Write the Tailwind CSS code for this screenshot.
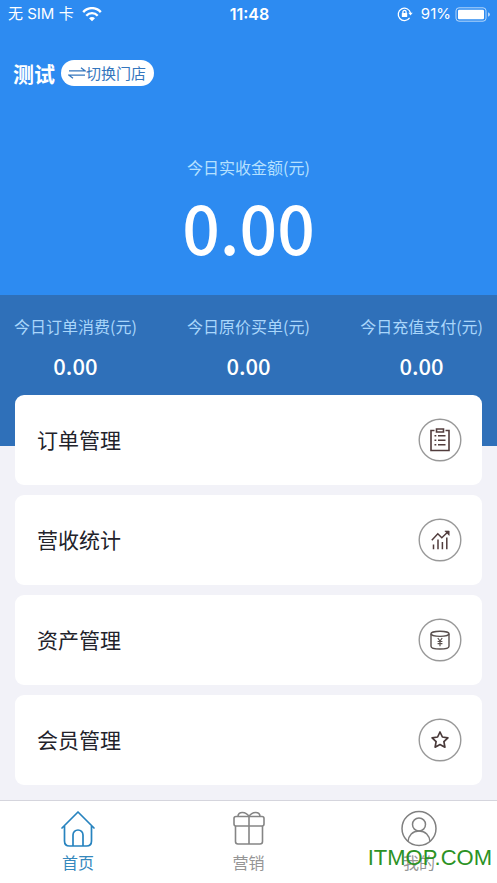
<!DOCTYPE html>
<html lang="zh-CN">
<head>
<meta charset="utf-8">
<meta name="viewport" content="width=device-width, initial-scale=1">
<title>首页</title>
<script src="https://cdn.jsdelivr.net/npm/@tailwindcss/browser@4"></script>
</head>
<body class="flex min-h-screen flex-col bg-[#f2f2f8] font-['Noto_Sans_CJK_SC',sans-serif] text-[#22222a]">
<header class="bg-[#2d8bf1] text-white">
  <div class="grid h-7 grid-cols-3 items-center pr-[6px] pl-2">
    <div class="flex items-center gap-2 text-[15px] leading-7 font-['Inter','Noto_Sans_CJK_SC',sans-serif]">
      <span class="whitespace-nowrap">无 SIM 卡</span>
      <svg class="h-[15px] w-5" viewBox="0 0 20 15" fill="none" stroke="currentColor" stroke-width="2.400" aria-hidden="true">
        <path d="M1.200 5.100C6-.2 14-.2 18.800 5.100M4.300 8.700c3.100-3.400 8.300-3.400 11.400 0"/>
        <path d="M10 14.200 7 11.200c1.700-1.700 4.300-1.700 6 0z" fill="currentColor" stroke="none"/>
      </svg>
    </div>
    <time class="text-center font-['Inter',sans-serif] text-base leading-7 font-semibold">11:48</time>
    <div class="flex items-center justify-end gap-1">
      <svg class="mr-1 h-4 w-4" viewBox="0 0 16 16" fill="none" stroke="currentColor" stroke-width="1.300" aria-hidden="true">
        <path d="M12.600 11.800A6.200 6.200 0 1 1 13.500 7"/>
        <path d="M11.300 6.800h4.400l-2.200 2.800z" fill="currentColor" stroke="none"/>
        <rect x="4.800" y="7" width="5.400" height="4" rx=".5" fill="currentColor" stroke="none"/>
        <path d="M5.900 7.200V6a1.600 1.600 0 0 1 3.200 0v1.200"/>
      </svg>
      <span class="font-['Inter',sans-serif] text-[15px] leading-7">91%</span>
      <svg class="h-[15px] w-9" viewBox="0 0 36 15" fill="none" aria-hidden="true">
        <rect x="1" y=".8" width="30" height="13.400" rx="3" stroke="#fff" stroke-opacity=".65"/>
        <rect x="3" y="2.800" width="26" height="9.400" rx="1.300" fill="#fff"/>
        <path d="M33 5.300q2 .8 2 2.200t-2 2.200z" fill="#fff" fill-opacity=".65"/>
      </svg>
    </div>
  </div>
  <div class="mt-8 flex items-center gap-[6px] px-[13px]">
    <h1 class="text-[21px] leading-[26px] font-bold">测试</h1>
    <button type="button" class="flex h-[26px] items-center rounded-full bg-white pr-2 pl-[7px] text-[15px] text-[#3476bd]">
      <svg class="h-4 w-[18px]" viewBox="0 0 18 16" fill="none" stroke="currentColor" stroke-width="1.300" aria-hidden="true">
        <path d="M1 5.800h16l-4-3M17 10.200H1l4 3"/>
      </svg>
      <span>切换门店</span>
    </button>
  </div>
  <div class="pt-[70px] pb-8 text-center">
    <p class="text-base leading-[22px] text-[#b5e0ff]">今日实收金额(元)</p>
    <p class="mt-3 text-[66px] leading-[73px] font-medium">0.00</p>
  </div>
</header>
<section class="flex justify-between bg-[#2f70b9] px-[14px] pt-5 pb-[67px] text-center">
  <div>
    <p class="text-base leading-[22px] text-[#a9d6fb]">今日订单消费(元)</p>
    <p class="mt-[14px] text-[22px] leading-7 font-medium text-white">0.00</p>
  </div>
  <div>
    <p class="text-base leading-[22px] text-[#a9d6fb]">今日原价买单(元)</p>
    <p class="mt-[14px] text-[22px] leading-7 font-medium text-white">0.00</p>
  </div>
  <div>
    <p class="text-base leading-[22px] text-[#a9d6fb]">今日充值支付(元)</p>
    <p class="mt-[14px] text-[22px] leading-7 font-medium text-white">0.00</p>
  </div>
</section>
<main class="-mt-[51px] flex flex-1 flex-col gap-[10px] px-[15px] pb-[15px]">
  <a href="#orders" class="flex h-[90px] items-center justify-between rounded-[9px] bg-white pr-5 pl-[22px] text-[21px]">
    <span>订单管理</span>
    <svg class="h-11 w-11" viewBox="0 0 44 44" fill="none" stroke="#513c3c" stroke-width="1.600" aria-hidden="true">
      <circle cx="22" cy="22" r="20.800" stroke="#999" stroke-width="1.400"/>
      <path d="M16.500 12.500H13v20h18v-20h-3.500M18.500 11h7v3h-7z"/>
      <path d="M16.500 17.800h1.800m1.700 0h7.500M16.500 22.300h1.800m1.700 0h7.500M16.500 26.800h1.800m1.700 0h7.500" stroke-width="1.400"/>
    </svg>
  </a>
  <a href="#revenue" class="flex h-[90px] items-center justify-between rounded-[9px] bg-white pr-5 pl-[22px] text-[21px]">
    <span>营收统计</span>
    <svg class="h-11 w-11" viewBox="0 0 44 44" fill="none" stroke="#513c3c" stroke-width="1.500" aria-hidden="true">
      <circle cx="22" cy="22" r="20.800" stroke="#999" stroke-width="1.400"/>
      <path d="m13.800 22.300 6-6.500 4 4 6-5.800"/>
      <path d="M26.800 13h4.400v4.400z" fill="#513c3c" stroke-width=".6"/>
      <path d="M15.500 26.500v4.700M20 21.500v9.700M24.400 24v7.200M28.800 19.500v11.700"/>
    </svg>
  </a>
  <a href="#assets" class="flex h-[90px] items-center justify-between rounded-[9px] bg-white pr-5 pl-[22px] text-[21px]">
    <span>资产管理</span>
    <svg class="h-11 w-11" viewBox="0 0 44 44" fill="none" stroke="#5a504e" stroke-width="1.400" aria-hidden="true">
      <circle cx="22" cy="22" r="20.800" stroke="#999"/>
      <ellipse cx="22" cy="15.800" rx="9" ry="2.600"/>
      <path d="M13 15.800v12.400c0 1.700 4 2.800 9 2.800s9-1.100 9-2.800V15.800"/>
      <path d="m19.800 20 2.200 3 2.200-3M22 23v5.200M19.600 23.500h4.800m-4.800 2.200h4.800" stroke-width="1.200"/>
    </svg>
  </a>
  <a href="#members" class="flex h-[90px] items-center justify-between rounded-[9px] bg-white pr-5 pl-[22px] text-[21px]">
    <span>会员管理</span>
    <svg class="h-11 w-11" viewBox="0 0 44 44" fill="none" stroke="#493a3a" stroke-width="1.700" stroke-linejoin="round" aria-hidden="true">
      <circle cx="22" cy="22" r="20.800" stroke="#999" stroke-width="1.400"/>
      <path d="m22 14 2.400 5 5.500.8-4 3.900 1 5.500-4.900-2.600-4.900 2.600 1-5.500-4-3.900 5.500-.8z"/>
    </svg>
  </a>
</main>
<nav class="relative flex h-[83px] justify-between border-t border-[#d5d5dd] bg-white px-[58px] pt-[9px] text-base text-[#959595]">
  <a href="#home" class="flex w-10 flex-col items-center gap-[3px] text-[#3588bd]" aria-current="page">
    <svg class="h-[37px] w-9" viewBox="0 0 36 37" fill="none" stroke="#2783bf" stroke-width="1.700" stroke-linecap="round" stroke-linejoin="round" aria-hidden="true">
      <path d="M2 18 18 2l16 16M4.500 16v15q0 5 5 5h17q5 0 5-5V16M13 36V25a5 5 0 0 1 10 0v11"/>
    </svg>
    <span class="leading-6">首页</span>
  </a>
  <a href="#marketing" class="flex w-10 flex-col items-center gap-[3px]">
    <svg class="h-[37px] w-9" viewBox="0 0 36 37" fill="none" stroke="#858585" stroke-width="1.600" stroke-linejoin="round" aria-hidden="true">
      <rect x="3" y="6.500" width="30" height="9.500" rx="2"/>
      <path d="M4.500 16v15.500q0 2.500 2.500 2.500h22q2.500 0 2.500-2.500V16M18 6.500V34M7 6.500c0-5.500 8-5 11 0 3-5 11-5.500 11 0"/>
    </svg>
    <span class="leading-6">营销</span>
  </a>
  <a href="#mine" class="flex w-10 flex-col items-center gap-[3px]">
    <svg class="h-[37px] w-9" viewBox="0 0 36 37" fill="none" stroke="#808080" stroke-width="1.500" aria-hidden="true">
      <circle cx="18" cy="18.500" r="17"/>
      <circle cx="18" cy="14.500" r="6.500"/>
      <path d="M7 31.500c.5-6 4.500-10.500 11-10.500s10.500 4.500 11 10.500"/>
    </svg>
    <span class="leading-6">我的</span>
  </a>
  <p class="absolute right-[5px] bottom-[13px] font-['Liberation_Sans',sans-serif] text-[22px] leading-6 text-[#2c9224]">ITMOP.COM</p>
</nav>
</body>
</html>
